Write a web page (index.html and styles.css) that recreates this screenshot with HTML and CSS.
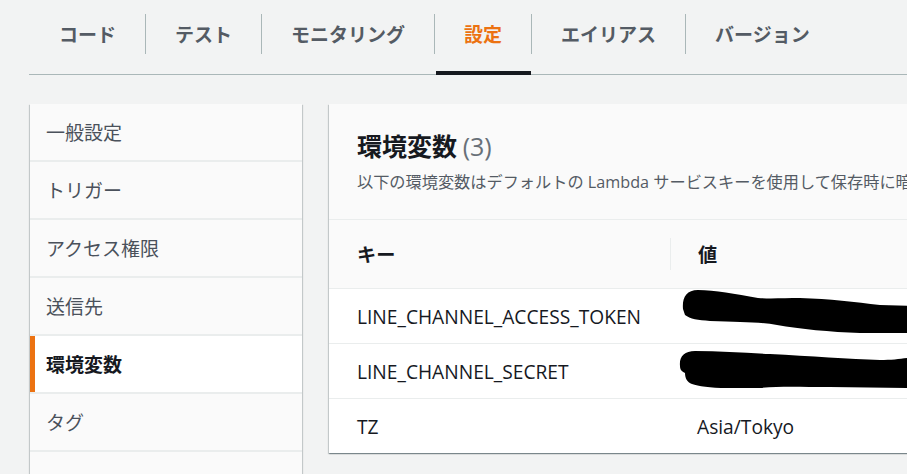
FILE: index.html
```html
<!DOCTYPE html>
<html lang="ja">
<head>
<meta charset="utf-8">
<title>環境変数</title>
<link rel="stylesheet" href="styles.css">
</head>
<body>
<div class="page">
  <nav class="tabs">
    <div class="tab"><span class="tab-label first">コード</span></div>
    <div class="tab"><span class="tab-label">テスト</span></div>
    <div class="tab"><span class="tab-label">モニタリング</span></div>
    <div class="tab active"><span class="tab-label">設定</span></div>
    <div class="tab"><span class="tab-label">エイリアス</span></div>
    <div class="tab"><span class="tab-label">バージョン</span></div>
  </nav>
  <div class="content">
    <ul class="side-nav">
      <li class="nav-item">一般設定</li>
      <li class="nav-item">トリガー</li>
      <li class="nav-item">アクセス権限</li>
      <li class="nav-item">送信先</li>
      <li class="nav-item active">環境変数</li>
      <li class="nav-item">タグ</li>
      <li class="nav-item"></li>
    </ul>
    <section class="panel">
      <header class="panel-header">
        <h2 class="panel-title">環境変数 <span class="count">(3)</span></h2>
        <p class="panel-desc">以下の環境変数はデフォルトの Lambda サービスキーを使用して保存時に暗号化されます。</p>
      </header>
      <table class="env-table">
        <thead>
          <tr>
            <th class="col-key">キー</th>
            <th class="col-value"><span class="divider">値</span></th>
          </tr>
        </thead>
        <tbody>
          <tr>
            <td class="col-key">LINE_CHANNEL_ACCESS_TOKEN</td>
            <td class="col-value redacted">
              <svg class="scribble" width="245" height="54" viewBox="0 0 245 54">
                <path d="M13,20 C12,9 16,1 28,1 C45,1 65,5 88,9 C100,10 115,9 130,9 C160,10 185,13 210,16 L245,17 L245,44 L190,44 C160,43 130,40 107,36 C90,33 70,33 40,32 C28,31 20,30 15,26 Z" fill="#000"/>
              </svg>
            </td>
          </tr>
          <tr>
            <td class="col-key">LINE_CHANNEL_SECRET</td>
            <td class="col-value redacted">
              <svg class="scribble" width="245" height="54" viewBox="0 0 245 54">
                <path d="M10,22 C9,13 14,7 25,7 C50,7 75,9 100,10 C140,12 180,15 210,16 C225,16 235,14 245,13 L245,44 L160,43 C130,43 110,42 90,44 L57,44 C40,44 28,42 22,40 C17,38 15,34 15,29 C11,27 10,25 10,22 Z" fill="#000"/>
              </svg>
            </td>
          </tr>
          <tr>
            <td class="col-key">TZ</td>
            <td class="col-value">Asia/Tokyo</td>
          </tr>
        </tbody>
      </table>
    </section>
  </div>
</div>
</body>
</html>
```
FILE: styles.css
```css
html, body {
  margin: 0;
  padding: 0;
  overflow: hidden;
  background: #f2f3f3;
}
body {
  font-family: "Open Sans", "Noto Sans CJK JP", sans-serif;
  color: #16191f;
}
.page {
  width: 1200px;
}
.tabs {
  display: flex;
  margin-left: 29px;
  height: 74px;
  border-bottom: 1px solid #aab7b8;
  box-sizing: content-box;
}
.tab {
  position: relative;
  padding-top: 14px;
}
.tab-label {
  display: block;
  height: 40px;
  line-height: 40px;
  padding: 0 29px;
  border-left: 1px solid #aab7b8;
  font-family: "Noto Sans CJK JP", sans-serif;
  font-size: 19px;
  font-weight: 700;
  color: #545b64;
}
.tab-label.first {
  border-left: 0;
  padding-left: 30px;
}
.tab.active .tab-label {
  color: #ec7211;
}
.tab.active::after {
  content: "";
  position: absolute;
  left: 2px;
  right: 0;
  bottom: -1px;
  height: 4px;
  background: #16191f;
}
.content {
  display: flex;
  align-items: flex-start;
  gap: 27px;
  padding: 29px 0 0 30px;
}
.side-nav {
  list-style: none;
  margin: 0;
  padding: 0;
  width: 272px;
  flex: none;
  background: #eaeded;
  box-shadow: 0 1px 1px 0 rgba(0,28,36,.3), 1px 1px 1px 0 rgba(0,28,36,.15), -1px 1px 1px 0 rgba(0,28,36,.15);
}
.nav-item {
  height: 56px;
  line-height: 56px;
  margin-bottom: 2px;
  background: #fafafa;
  font-family: "Noto Sans CJK JP", sans-serif;
  font-size: 19px;
  color: #4a515b;
  border-left: 5px solid transparent;
  padding-left: 11px;
}
.nav-item:last-child {
  height: 80px;
}
.nav-item.active {
  background: #fff;
  border-left-color: #ec7211;
  color: #16191f;
  font-weight: 700;
}
.panel {
  width: 760px;
  flex: none;
  background: #fff;
  box-shadow: 0 1px 1px 0 rgba(0,28,36,.3), 1px 1px 1px 0 rgba(0,28,36,.15), -1px 1px 1px 0 rgba(0,28,36,.15);
}
.panel-header {
  background: #fafafa;
  padding: 26px 28px 25px 28px;
  border-bottom: 1px solid #eaeded;
}
.panel-title {
  margin: 0;
  height: 30px;
  line-height: 30px;
  font-family: "Noto Sans CJK JP", sans-serif;
  font-size: 25px;
  font-weight: 700;
  color: #16191f;
}
.count {
  font-family: "Open Sans", sans-serif;
  font-weight: 400;
  color: #687078;
}
.panel-desc {
  margin: 10px 0 0 0;
  height: 24px;
  line-height: 24px;
  font-size: 16.2px;
  color: #545b64;
  white-space: nowrap;
  overflow: hidden;
}
.env-table {
  width: 100%;
  border-collapse: collapse;
  font-size: 19.2px;
}
.env-table th {
  height: 68px;
  padding: 0;
  background: #fafafa;
  text-align: left;
  font-family: "Noto Sans CJK JP", sans-serif;
  font-weight: 700;
  color: #16191f;
  vertical-align: middle;
}
.env-table th.col-key {
  padding-left: 28px;
  width: 313px;
}
.divider {
  display: block;
  height: 32px;
  line-height: 32px;
  border-left: 1px solid #eaeded;
  padding-left: 27px;
}
.env-table td {
  height: 54px;
  padding: 0;
  border-top: 1px solid #eaeded;
  vertical-align: middle;
  color: #16191f;
}
.env-table td.col-key {
  padding-left: 28px;
}
.env-table td.col-value {
  padding-left: 27px;
}
.redacted {
  position: relative;
}
.scribble {
  position: absolute;
  left: 0;
  top: 0;
  overflow: visible;
}
```
